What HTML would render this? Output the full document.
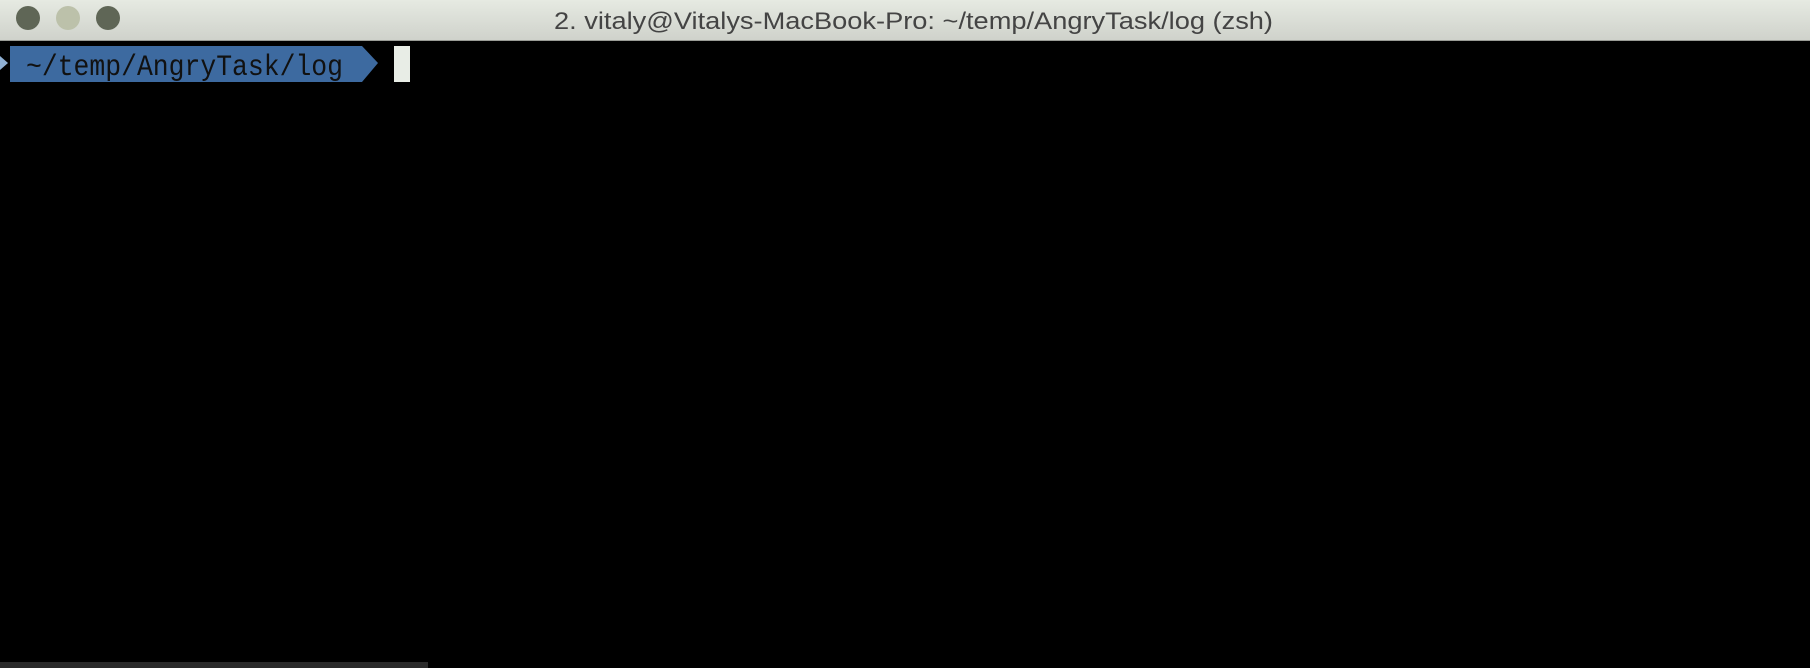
<!DOCTYPE html>
<html><head><style>
body{margin:0;width:1810px;height:668px;background:#000;overflow:hidden;position:relative;font-family:"Liberation Sans",sans-serif}
.tb{position:absolute;left:0;top:0;width:1810px;height:40px;background:linear-gradient(#e6eae2,#cfd2cb);border-bottom:1px solid #9a9c96}
.dot{position:absolute;top:6px;width:24px;height:24px;border-radius:50%}
</style></head><body>
<div class="tb">
<div class="dot" style="left:16px;background:#5f6656"></div>
<div class="dot" style="left:56px;background:#bcc1aa"></div>
<div class="dot" style="left:96px;background:#5f6656"></div>
<svg width="1810" height="40" style="position:absolute;left:0;top:0"><text x="554" y="29" font-size="24" fill="#444" font-family="Liberation Sans, sans-serif" textLength="719" lengthAdjust="spacingAndGlyphs">2. vitaly@Vitalys-MacBook-Pro: ~/temp/AngryTask/log (zsh)</text></svg>
</div>
<svg width="1810" height="668" style="position:absolute;left:0;top:0">
<polygon points="0,56 8,63 0,70" fill="#8fb0d4"/>
<polygon points="10,46 362,46 378,63 362,82 10,82" fill="#3d6aa0"/>
<text x="26" y="75" font-size="30" fill="#111" font-family="Liberation Mono, monospace" textLength="317" lengthAdjust="spacingAndGlyphs">~/temp/AngryTask/log</text>
<rect x="394" y="46" width="16" height="36" fill="#e8ede6"/>
<rect x="0" y="662" width="428" height="6" fill="#2a2a2a"/>
</svg>
</body></html>
